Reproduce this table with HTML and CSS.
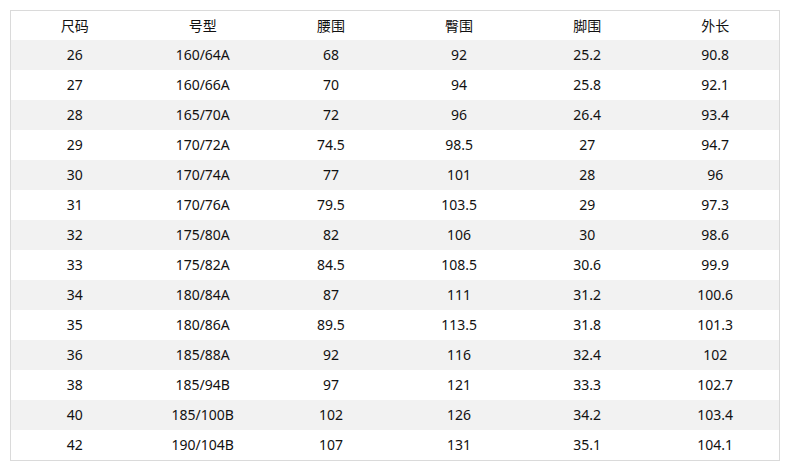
FILE: index.html
```html
<!DOCTYPE html>
<html>
<head>
<meta charset="utf-8">
<link rel="stylesheet" href="styles.css">
</head>
<body>
<table class="size-table">
<thead>
<tr><th>尺码</th><th>号型</th><th>腰围</th><th>臀围</th><th>脚围</th><th>外长</th></tr>
</thead>
<tbody>
<tr><td>26</td><td>160/64A</td><td>68</td><td>92</td><td>25.2</td><td>90.8</td></tr>
<tr><td>27</td><td>160/66A</td><td>70</td><td>94</td><td>25.8</td><td>92.1</td></tr>
<tr><td>28</td><td>165/70A</td><td>72</td><td>96</td><td>26.4</td><td>93.4</td></tr>
<tr><td>29</td><td>170/72A</td><td>74.5</td><td>98.5</td><td>27</td><td>94.7</td></tr>
<tr><td>30</td><td>170/74A</td><td>77</td><td>101</td><td>28</td><td>96</td></tr>
<tr><td>31</td><td>170/76A</td><td>79.5</td><td>103.5</td><td>29</td><td>97.3</td></tr>
<tr><td>32</td><td>175/80A</td><td>82</td><td>106</td><td>30</td><td>98.6</td></tr>
<tr><td>33</td><td>175/82A</td><td>84.5</td><td>108.5</td><td>30.6</td><td>99.9</td></tr>
<tr><td>34</td><td>180/84A</td><td>87</td><td>111</td><td>31.2</td><td>100.6</td></tr>
<tr><td>35</td><td>180/86A</td><td>89.5</td><td>113.5</td><td>31.8</td><td>101.3</td></tr>
<tr><td>36</td><td>185/88A</td><td>92</td><td>116</td><td>32.4</td><td>102</td></tr>
<tr><td>38</td><td>185/94B</td><td>97</td><td>121</td><td>33.3</td><td>102.7</td></tr>
<tr><td>40</td><td>185/100B</td><td>102</td><td>126</td><td>34.2</td><td>103.4</td></tr>
<tr><td>42</td><td>190/104B</td><td>107</td><td>131</td><td>35.1</td><td>104.1</td></tr>
</tbody>
</table>
</body>
</html>
```
FILE: styles.css
```css
html, body {
  margin: 0;
  padding: 0;
  background: #fff;
}
body {
  padding: 10px;
  font-family: "Noto Sans", "Noto Sans CJK SC", sans-serif;
  font-size: 14px;
  color: #111;
}
.size-table {
  border-collapse: collapse;
  border: 1px solid #dadada;
  width: 770px;
  table-layout: fixed;
}
.size-table th,
.size-table td {
  padding: 0;
  text-align: center;
  font-weight: normal;
  height: 30px;
  line-height: 30px;
}
.size-table th {
  height: 29px;
  line-height: 29px;
}
.size-table tbody tr:nth-child(odd) {
  background: #f2f2f2;
}
```
